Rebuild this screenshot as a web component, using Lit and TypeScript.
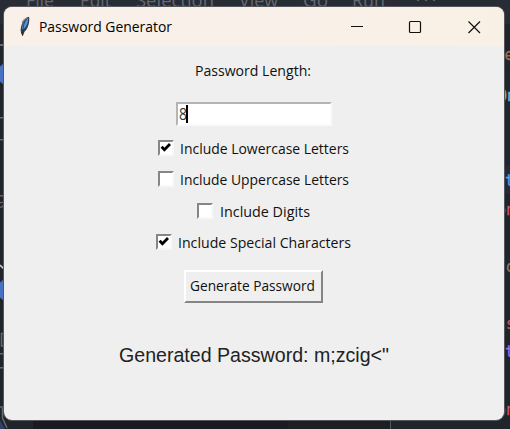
import { LitElement, html, css, svg } from 'lit';
import { customElement, property } from 'lit/decorators.js';

// Single-line label whose glyphs are condensed to a given width.
@customElement('fit-label')
class FitLabel extends LitElement {
  @property() text = '';
  @property({ type: Number }) width = 100;
  @property({ type: Number }) height = 20;
  @property({ type: Number }) baseline = 15;
  static styles = css`
    :host { display: block; flex: none; }
    svg { display: block; overflow: visible; }
  `;
  render() {
    return html`<svg width=${this.width} height=${this.height}>${svg`<text x="0" y=${this.baseline}
      fill="currentColor" textLength=${this.width} lengthAdjust="spacingAndGlyphs">${this.text}</text>`}</svg>`;
  }
}

@customElement('check-row')
class CheckRow extends LitElement {
  @property() label = '';
  @property({ type: Number }) width = 100;
  @property({ type: Boolean }) checked = false;
  static styles = css`
    :host { display: flex; align-items: flex-start; gap: 6.5px; height: 31.3px; }
    .box {
      box-sizing: border-box; width: 16px; height: 16px; background: #fff; flex: none;
      border: 2px solid; border-color: #868686 #f8f8f8 #f8f8f8 #868686;
    }
    svg { display: block; }
  `;
  render() {
    return html`<div class="box">${this.checked
        ? html`<svg width="12" height="12" viewBox="0 0 12 12"><path d="M1.600 4.800 L4.400 7.800 L10 2" fill="none" stroke="#000" stroke-width="2.800"/></svg>`
        : ''}</div>
      <fit-label .text=${this.label} .width=${this.width} .height=${20} .baseline=${14}></fit-label>`;
  }
}

@customElement('editor-backdrop')
class EditorBackdrop extends LitElement {
  static styles = css`
    :host { display: block; position: absolute; inset: 0; }
    svg { display: block; font-family: "Open Sans", "Noto Sans", sans-serif; }
    .menu { font-size: 19px; fill: #646872; }
    .code { font-family: "DejaVu Sans Mono", monospace; font-size: 15px; }
  `;
  render() {
    const menu: [string, number, number][] = [['File', 26, 28], ['Edit', 80, 31], ['Selection', 136, 78],
      ['View', 239, 39], ['Go', 303, 25], ['Run', 352, 33]];
    const code: [string, number, number, string][] = [['e', 504.5, 60, '#9a704c'], ['O', 498, 101, '#b5985c'],
      ['n', 507, 101, '#5cc0dc'], ['t', 505, 186, '#5aa0ee'], ['on', 497, 215, '#cc5560'],
      ['c', 505.5, 272, '#8d7a68'], ['s', 506, 329, '#d0545e'], ['t', 505, 357, '#9a70ea'], ['on', 497, 415, '#cc5560']];
    return html`<svg width="510" height="429" viewBox="0 0 510 429">
      <rect width="510" height="429" fill="#20242b"/>
      <rect width="510" height="24" fill="#282c35"/>
      <rect x="504" y="78" width="6" height="88" fill="#1f272e"/>
      <rect x="504" y="166" width="6" height="28" fill="#222b36"/>
      <rect x="33" y="420" width="255" height="9" fill="#191b20"/>
      <rect x="288" y="420" width="102" height="9" fill="#1e1f23"/>
      <rect x="390" y="420" width="1" height="9" fill="#55575d"/>
      ${menu.map(([t, x, w]) => svg`<text class="menu" x=${x} y="6.500" textLength=${w} lengthAdjust="spacingAndGlyphs">${t}</text>`)}
      <g fill="#60636b"><rect x="417" y="0" width="2" height="1"/><rect x="425" y="0" width="2" height="1"/><rect x="433" y="0" width="2" height="1"/></g>
      ${code.map(([t, x, y, c]) => svg`<text class="code" x=${x} y=${y} fill=${c} stroke=${c} stroke-width=".3">${t}</text>`)}
      <g fill="#4872c4"><circle cx="8" cy="74" r="11"/><circle cx="8" cy="290" r="11"/></g>
      <rect x="3" y="46" width="1" height="7" fill="#3d3a9c"/>
      <g fill="#666970"><rect y="44" width="4" height="2"/><rect y="117" width="4" height="1.5"/><rect y="139" width="4" height="1.5"/>
      <rect y="353" width="4" height="1.5"/><rect y="367" width="4" height="1.5"/></g>
      <text x="-4" y="208" font-size="18" fill="#71665f">9</text>
      <path d="M0 265 L5 270" stroke="#d0cdc4" stroke-width="1.6"/>
      <path d="M4 333.500 H1.500 V346 H4 M0 407 H4 M2.500 408 V418 L7 428" fill="none" stroke="#666970" stroke-width="1.5"/>
      <path d="M0 420 L5 429 H0 Z" fill="#2d4266"/>
    </svg>`;
  }
}

@customElement('app-root')
class AppRoot extends LitElement {
  static styles = css`
    :host { display: block; position: relative; width: 510px; height: 429px; overflow: hidden; }
    .window {
      position: absolute; left: 4px; top: 7px; width: 500px; height: 413px; border-radius: 8px; overflow: hidden;
      background: #efefef; color: #111; font: 15.3px "Open Sans", "Noto Sans", sans-serif;
      display: flex; flex-direction: column;
    }
    .frame {
      position: absolute; left: 3px; top: 6px; width: 500px; height: 413px; border: 1px solid #55575b; border-radius: 9px;
    }
    .bar {
      flex: none; height: 39px; display: flex; align-items: center;
      background: linear-gradient(90deg, #f8f0e9, #f9f0e8 70%, #f9f0e5); color: #000;
    }
    .feather { margin-left: 13px; width: 22px; height: 22px; flex: none; }
    .controls { margin-left: auto; display: flex; }
    .form { flex: 1; display: flex; flex-direction: column; align-items: center; }
    .heading { margin-top: 14px; margin-right: 2px; }
    .entry {
      box-sizing: border-box; width: 156px; height: 24px; margin: 22px 1px 14px 0;
      background: #fff; border: 2px solid; border-color: #b4b4b4 #fafafa #fafafa #b4b4b4;
      display: flex; padding: 1px 0 0 1px;
    }
    .digit { font-size: 16px; color: #333; }
    .caret { width: 2px; height: 18px; background: #000; margin-left: -1px; }
    .options { display: flex; flex-direction: column; align-items: center; margin-right: 1px; }
    .generate {
      box-sizing: border-box; width: 139px; height: 33px; margin: 4.800px 2px 0 0; padding: 0 0 0 4.500px;
      background: #efefef; border: 2px solid; border-color: #fff #858585 #858585 #fff; color: #111;
      font: inherit; text-align: left; display: block;
    }
    .result { margin-top: 39px; margin-right: 1px; font: 20.5px "Liberation Sans", Arial, sans-serif; color: #222; }
  `;
  render() {
    return html`
      <editor-backdrop></editor-backdrop>
      <div class="frame"></div>
      <div class="window">
        <div class="bar">
          <svg class="feather" viewBox="0 0 22 22">
            <path d="M11.800 .8 C8 2 5 6.500 4 11 L3.500 15 L5.400 17 L6.300 18.500 L7.700 15.500 C10.500 13 12.500 8 12.300 2 Z" fill="#2d3d50"/>
            <path d="M11.200 2 C8 4 5.700 7 4.800 12 L5.500 14 C8.500 12 11.500 7 11.200 2 Z" fill="#5793dc"/>
            <path d="M10.500 2 C7 6 6 9 5.500 20" stroke="#252b31" stroke-width=".8" fill="none"/>
            <path d="M5 6.500 L7.500 3.500 L10.500 1.500" stroke="#8b8c87" stroke-width="1.200" fill="none"/>
            <path d="M4.500 16 L5.800 19" stroke="#27251f" stroke-width="1.500"/>
          </svg>
          <fit-label .text=${'Password Generator'} .width=${133} .height=${20} .baseline=${14.5}></fit-label>
          <svg class="controls" width="154" height="38" viewBox="0 0 154 38" fill="none" stroke="#111" stroke-width="1.200">
            <path d="M1 18.500 H13" stroke-width="1"/>
            <rect x="59.500" y="13.500" width="11" height="11" rx="1"/>
            <path d="M118.500 13.500 L130 25 M130 13.500 L118.500 25"/>
          </svg>
        </div>
        <div class="form">
          <fit-label class="heading" .text=${'Password Length:'} .width=${116} .height=${20} .baseline=${16}></fit-label>
          <div class="entry">
            <fit-label class="digit" .text=${'8'} .width=${8} .height=${18} .baseline=${15}></fit-label>
            <div class="caret"></div>
          </div>
          <div class="options">
            <check-row label="Include Lowercase Letters" .width=${169} checked></check-row>
            <check-row label="Include Uppercase Letters" .width=${169}></check-row>
            <check-row label="Include Digits" .width=${90}></check-row>
            <check-row label="Include Special Characters" .width=${173} checked></check-row>
          </div>
          <button class="generate"><fit-label .text=${'Generate Password'} .width=${125} .height=${20} .baseline=${14.5}></fit-label></button>
          <fit-label class="result" .text=${'Generated Password: m;zcig<"'} .width=${270} .height=${26} .baseline=${20.4}></fit-label>
        </div>
      </div>`;
  }
}
